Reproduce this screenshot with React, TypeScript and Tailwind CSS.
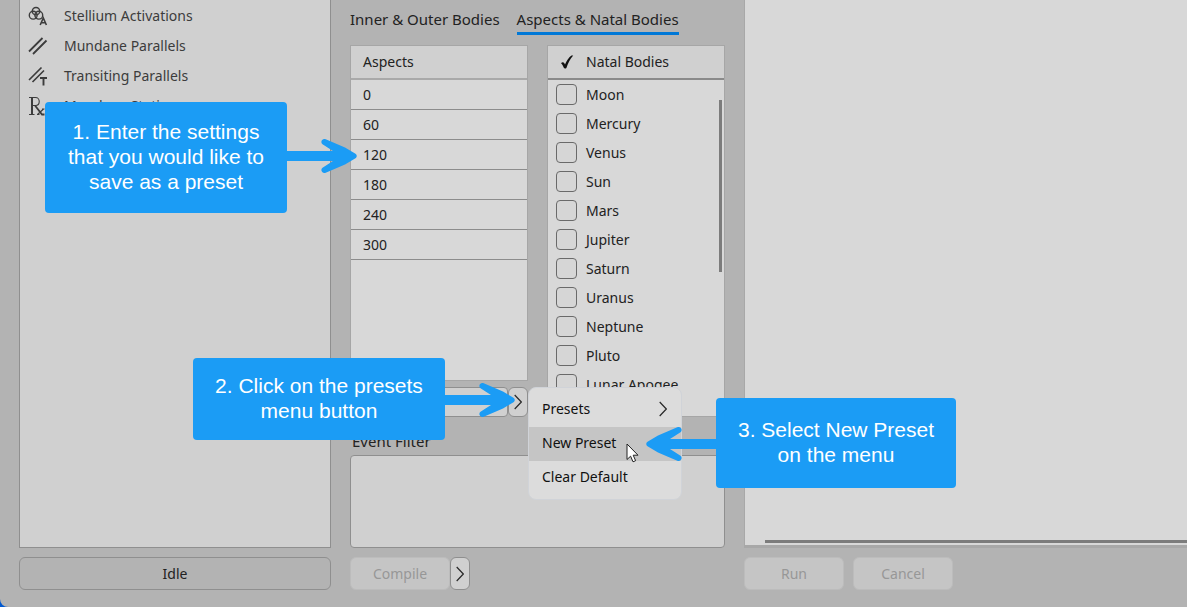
import * as React from "react";
import clsx from "clsx";

type Activity = { icon: React.ReactNode; label: string };

const activities: Activity[] = [
  { icon: <StelliumIcon />, label: "Stellium Activations" },
  { icon: <ParallelsIcon />, label: "Mundane Parallels" },
  { icon: <TransitingIcon />, label: "Transiting Parallels" },
  { icon: <StationsIcon />, label: "Mundane Stations" },
];

const aspects = ["0", "60", "120", "180", "240", "300"];

const natalBodies = [
  "Moon",
  "Mercury",
  "Venus",
  "Sun",
  "Mars",
  "Jupiter",
  "Saturn",
  "Uranus",
  "Neptune",
  "Pluto",
  "Lunar Apogee",
];

function StelliumIcon() {
  return (
    <svg viewBox="0 0 20 20" className="size-5" fill="none" stroke="currentColor" strokeWidth="1.4">
      <circle cx="8" cy="5.2" r="3.7" />
      <circle cx="5.2" cy="9.2" r="3.9" />
      <circle cx="10.8" cy="9.2" r="3.9" />
      <path d="M12.2 19 15.3 12 18.4 19M13.2 16.7h4.2" strokeWidth="1.6" />
    </svg>
  );
}

function ParallelsIcon() {
  return (
    <svg viewBox="0 0 20 20" className="size-5" fill="none" stroke="currentColor" strokeWidth="1.8">
      <path d="M1 15.5 14.5 2M5 18 18.5 4.5" />
    </svg>
  );
}

function TransitingIcon() {
  return (
    <svg viewBox="0 0 20 20" className="size-5" fill="none" stroke="currentColor" strokeWidth="1.6">
      <path d="M1 14 13.5 1.5M4.5 16 16 4.5" />
      <path d="M12 12h7M15.5 12v7.5" strokeWidth="1.9" />
    </svg>
  );
}

function StationsIcon() {
  return (
    <svg viewBox="0 0 20 20" className="size-5" fill="none" stroke="currentColor">
      <path d="M1 1.5h6.500c5 0 5 8 0 8H4.500M1 18.500h5.500" strokeWidth="1.1" />
      <path d="M4 1.500v17" strokeWidth="2" />
      <path d="M7 9.500 14 18.500h2.500" strokeWidth="1.8" />
      <path d="M15.500 13 9.500 18.500M9 18.500h2.500M14 13h2.500" strokeWidth="1.2" />
    </svg>
  );
}

function Chevron() {
  return (
    <svg viewBox="0 0 8 16" className="h-4 w-2 shrink-0" fill="none" stroke="#2a2a2a" strokeWidth="1.2">
      <path d="M.7 1 7.3 8 .7 15" />
    </svg>
  );
}

function Arrow({ className }: { className?: string }) {
  return (
    <svg viewBox="2 0 70 36" className={clsx("absolute h-9 w-[70px]", className)} fill="#1b9cf5">
      <path d="M0 13H48L37.500 6.300C34.800 4 37.300 0 40.700 1.300L60 9.600L70.500 15.800C72.200 17 72.200 19 70.500 20.200L60 26.400L40.700 34.700C37.300 36 34.800 32 37.500 29.700L48 23H0Z" />
    </svg>
  );
}

function Callout({ className, children }: { className: string; children: React.ReactNode }) {
  return (
    <div
      className={clsx(
        "absolute z-20 rounded bg-[#1b9cf5] text-center font-['Liberation_Sans',Arial,sans-serif] text-[21px] leading-[25px] text-white",
        className,
      )}
    >
      {children}
    </div>
  );
}

function Sidebar() {
  return (
    <nav className="border border-t-0 border-[#8f8f8f] bg-[#d0d0d0]">
      <ul className="pt-px">
        {activities.map((item) => (
          <li key={item.label}>
            <a href="#" className="flex h-[30px] items-center gap-4 pl-2 text-[#3c3c3c]">
              {item.icon}
              {item.label}
            </a>
          </li>
        ))}
      </ul>
    </nav>
  );
}

function AspectList() {
  return (
    <table className="block h-[336px] w-[178px] border border-[#a6a6a6] bg-[#d8d8d8] text-left">
      <thead className="block border-b-2 border-[#a9a9a9] bg-[#d0d0d0]">
        <tr className="block">
          <th scope="col" className="flex h-8 items-center px-3 font-normal">
            Aspects
          </th>
        </tr>
      </thead>
      <tbody className="block">
        {aspects.map((value) => (
          <tr key={value} className="block border-b border-[#8c8c8c]">
            <td className="flex h-[29px] items-center px-3">{value}</td>
          </tr>
        ))}
      </tbody>
    </table>
  );
}

function NatalBodies() {
  return (
    <div className="relative h-[372px] w-[178px] overflow-hidden border border-[#a6a6a6] bg-[#d8d8d8]">
      <div className="flex h-[34px] items-center gap-3 border-b-2 border-[#8a8a8a] bg-[#d0d0d0] pl-3">
        <svg viewBox="0 0 14 14" className="size-3.5" fill="#111">
          <path d="M1 8.200C2 7 3.500 7 4.200 8L5 9.600C6.500 6 9 2 11.500.5L13.200.6C10 4 8 8.500 6.400 13 5.400 13.800 4.200 13.600 3.800 12.800 3.200 11 2.200 9 1 8.200Z" />
        </svg>
        Natal Bodies
      </div>
      <ul>
        {natalBodies.map((body) => (
          <li key={body}>
            <label className="flex h-[29px] items-center gap-[9px] pl-2">
              <input
                type="checkbox"
                className="size-[21px] appearance-none rounded border border-[#6a6a6a] bg-[#d6d6d6] checked:bg-[#0078d7]"
              />
              {body}
            </label>
          </li>
        ))}
      </ul>
      <div className="absolute right-0.5 top-[54px] h-[172px] w-[3px] bg-[#7c7c7c]" />
    </div>
  );
}

function PresetMenu() {
  return (
    <div
      role="menu"
      className="absolute left-full top-0 z-10 w-[154px] rounded-lg border border-[#d0d3d8] bg-[#dcdcdc] pb-1 pt-[5px] text-[#111]"
    >
      <button role="menuitem" className="flex h-[34px] w-full items-center justify-between pb-0.5 pl-[13px] pr-[14px]">
        Presets
        <Chevron />
      </button>
      <button role="menuitem" className="flex h-[34px] w-full items-center bg-[#c5c5c5] pb-0.5 pl-[13px]">
        New Preset
      </button>
      <button role="menuitem" className="flex h-[34px] w-full items-center pb-0.5 pl-[13px]">
        Clear Default
      </button>
      <svg viewBox="0 0 13 20" className="absolute left-[97px] top-[55px] h-5 w-[13px]" fill="#fff" stroke="#222">
        <path d="M1 1V16.500L4.600 13.200 7 18.800 9.600 17.700 7.200 12.200H12Z" />
      </svg>
    </div>
  );
}

function Settings() {
  const [preset, setPreset] = React.useState("");

  return (
    <section>
      <div role="tablist" className="flex h-[45px] gap-[17px] pt-2 text-[15px]">
        <button role="tab" aria-selected={false} className="h-[27px] border-b-[3px] border-transparent">
          Inner &amp; Outer Bodies
        </button>
        <button role="tab" aria-selected className="h-[27px] border-b-[3px] border-[#0078d7]">
          Aspects &amp; Natal Bodies
        </button>
      </div>

      <div className="flex items-start justify-between">
        <div>
          <AspectList />
          <div className="relative mt-1.5 flex h-[30px] w-[178px]">
            <input
              aria-label="Preset"
              value={preset}
              onChange={(e) => setPreset(e.target.value)}
              className="w-[158px] rounded border border-[#8f8f8f] bg-[#d0d0d0] px-2"
            />
            <button
              aria-label="Presets menu"
              className="flex flex-1 items-center justify-center rounded-md border border-[#8f8f8f] bg-[#d0d0d0]"
            >
              <Chevron />
            </button>
            <PresetMenu />
          </div>
        </div>
        <NatalBodies />
      </div>

      <label htmlFor="event-filter" className="mt-3.5 block h-6 pl-0.5 text-[15px] leading-5">
        Event Filter
      </label>
      <textarea
        id="event-filter"
        className="block h-[93px] w-full resize-none rounded border border-[#8f8f8f] bg-[#d0d0d0] p-2"
      />
    </section>
  );
}

export default function App() {
  return (
    <div className="bg-[#0058d0]">
      <main className="relative grid min-h-screen grid-cols-[312px_375px_minmax(0,1fr)] grid-rows-[auto_1fr] gap-x-[19px] gap-y-[9px] overflow-hidden rounded-bl-lg bg-[#b3b3b3] pb-4 pl-[19px] font-['Noto_Sans','Open_Sans',sans-serif] text-sm text-[#222]">
        <Sidebar />
        <Settings />
        <section className="flex flex-col justify-end border-b-[3px] border-l border-[#a8a8a8] bg-[#d8d8d8] pb-0.5">
          <div className="ml-5 h-[3px] bg-[#7c7c7c]" />
        </section>

        <div role="status" className="flex h-[33px] items-center justify-center rounded-md border border-[#8f8f8f]">
          Idle
        </div>
        <div className="flex h-[33px]">
          <button disabled className="w-[100px] rounded-md border border-[#bcbcbc] bg-[#c5c5c5] text-[#979797]">
            Compile
          </button>
          <button
            aria-label="Compile menu"
            className="flex w-5 items-center justify-center rounded-md border border-[#8f8f8f] bg-[#d0d0d0]"
          >
            <Chevron />
          </button>
        </div>
        <div className="flex h-[33px] gap-[9px]">
          <button disabled className="w-[100px] rounded-md border border-[#bcbcbc] bg-[#c5c5c5] text-[#979797]">
            Run
          </button>
          <button disabled className="w-[100px] rounded-md border border-[#bcbcbc] bg-[#c5c5c5] text-[#979797]">
            Cancel
          </button>
        </div>

        <Callout className="left-[45px] top-[102px] h-[111px] w-[242px] pt-[17px]">
          1. Enter the settings
          <br />
          that you would like to
          <br />
          save as a preset
          <Arrow className="left-full top-9" />
        </Callout>
        <Callout className="left-[193px] top-[358px] h-[82px] w-[252px] pt-[15px]">
          2. Click on the presets
          <br />
          menu button
          <Arrow className="left-full top-6" />
        </Callout>
        <Callout className="left-[716px] top-[398px] h-[90px] w-[240px] pt-[19px]">
          3. Select New Preset
          <br />
          on the menu
          <Arrow className="right-full top-7 rotate-180" />
        </Callout>
      </main>
    </div>
  );
}
